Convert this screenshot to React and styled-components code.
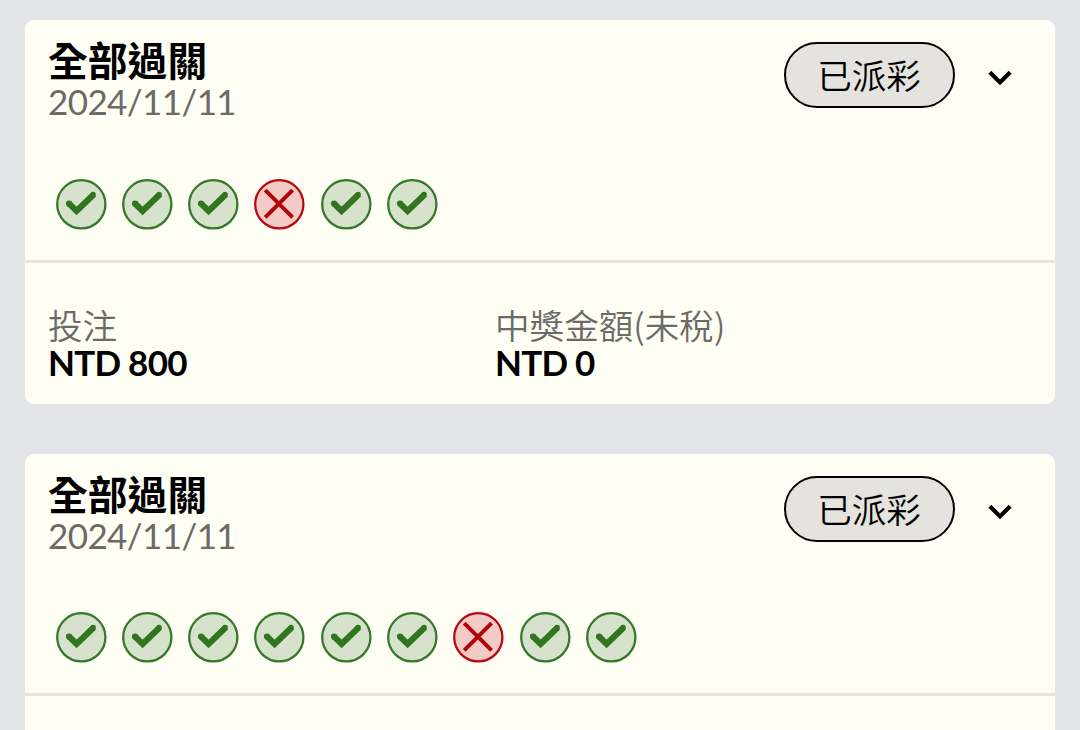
import React from "react";
import styled, { createGlobalStyle } from "styled-components";

const GlobalStyle = createGlobalStyle`
  * {
    box-sizing: border-box;
  }

  body {
    margin: 0;
    background-color: #e4e5e8;
    font-family: "Lato", "Noto Sans CJK TC", sans-serif;
  }

  p, h2, ul, dl, dt, dd {
    margin: 0;
    padding: 0;
  }
`;

const TicketList = styled.main`
  display: flex;
  flex-direction: column;
  gap: 50px;
  height: 730px;
  padding: 20px 25px 0;
  overflow: hidden;
`;

const TicketCard = styled.article`
  height: 384px;
  flex-shrink: 0;
  border-radius: 9px;
  background-color: #fffef5;
`;

const TicketTop = styled.section`
  height: ${(props) => props.$height}px;
  border-bottom: 3px solid #e7e3de;
`;

const TicketHeader = styled.header`
  display: flex;
  justify-content: space-between;
  height: ${(props) => props.$height}px;
  padding: 22px 43.5px 0 23px;
`;

const TicketTitle = styled.h2`
  margin-top: -1px;
  font-size: 39.8px;
  font-weight: 700;
  line-height: 40px;
  color: #000;
`;

const TicketDate = styled.p`
  font-size: 35px;
  letter-spacing: -0.6px;
  line-height: 40px;
  color: #6b6a66;
`;

const HeaderActions = styled.div`
  display: flex;
  align-items: flex-start;
`;

const StatusPill = styled.span`
  display: flex;
  justify-content: center;
  width: 171px;
  height: 66px;
  border: 2.5px solid #000;
  border-radius: 33px;
  background-color: #e5e3de;
  font-family: "Noto Sans CJK TC DemiLight", "Noto Sans CJK TC", sans-serif;
  font-size: 34.5px;
  font-weight: 350;
  line-height: 61px;
  color: #000;
`;

const ExpandButton = styled.button`
  display: flex;
  margin: 28px 0 0 33px;
  padding: 0;
  border: 0;
  background: none;
  cursor: pointer;
`;

const ResultList = styled.ul`
  display: flex;
  gap: 15.3px;
  padding-left: 30.5px;
  list-style: none;

  > li {
    width: 51px;
    height: 51px;
  }

  svg {
    display: block;
  }
`;

const AmountList = styled.dl`
  display: grid;
  grid-template-columns: 447px 1fr;
  padding: 41px 23px 0;
`;

const AmountLabel = styled.dt`
  font-family: "Noto Sans CJK TC DemiLight", "Noto Sans CJK TC", sans-serif;
  font-size: 34.6px;
  font-weight: 350;
  line-height: 40px;
  color: #6b6a66;
`;

const AmountValue = styled.dd`
  font-size: 35px;
  font-weight: 700;
  letter-spacing: -0.75px;
  line-height: 36px;
  color: #000;
`;

const tickets = [
  {
    id: 1,
    headerHeight: 159,
    topHeight: 243,
    results: [true, true, true, false, true, true],
    amounts: [
      { label: "投注", value: 800 },
      { label: "中獎金額(未稅)", value: 0 },
    ],
  },
  {
    id: 2,
    headerHeight: 158,
    topHeight: 242,
    results: [true, true, true, true, true, true, false, true, true],
    amounts: [],
  },
];

const ChevronIcon = () => (
  <svg width="24" height="16" viewBox="0 0 24 16" fill="none">
    <path d="M1.8 2.2 12 12.4 22.2 2.2" stroke="#000" strokeWidth="4.2" />
  </svg>
);

const WonIcon = () => (
  <svg width="51" height="51" viewBox="0 0 51 51" fill="none">
    <circle cx="25.3" cy="25.3" r="24.1" fill="#d7e2cc" stroke="#35782a" strokeWidth="2.3" />
    <circle cx="13" cy="24.5" r="3.1" fill="#32751f" />
    <path d="M13 24.5 20.6 32 37.9 15.2" stroke="#32751f" strokeWidth="6.2" />
    <circle cx="37.2" cy="15.4" r="2.6" fill="#32751f" />
  </svg>
);

const LostIcon = () => (
  <svg width="51" height="51" viewBox="0 0 51 51" fill="none">
    <circle cx="25.3" cy="25.3" r="24.1" fill="#f3cbc6" stroke="#b80810" strokeWidth="2.3" />
    <path d="M11.2 11.2 38.6 38.4M38.6 11.2 11.2 38.4" stroke="#b4040b" strokeWidth="4" />
  </svg>
);

const Ticket = ({ ticket }) => {
  const resultItems = ticket.results.map((won, index) => {
    return <li key={index}>{won ? <WonIcon /> : <LostIcon />}</li>;
  });

  return (
    <TicketCard>
      <TicketTop $height={ticket.topHeight}>
        <TicketHeader $height={ticket.headerHeight}>
          <div>
            <TicketTitle>全部過關</TicketTitle>
            <TicketDate>2024/11/11</TicketDate>
          </div>
          <HeaderActions>
            <StatusPill>已派彩</StatusPill>
            <ExpandButton aria-expanded="false">
              <ChevronIcon />
            </ExpandButton>
          </HeaderActions>
        </TicketHeader>
        <ResultList>{resultItems}</ResultList>
      </TicketTop>
      <AmountList>
        {ticket.amounts.map((amount) => (
          <div key={amount.label}>
            <AmountLabel>{amount.label}</AmountLabel>
            <AmountValue>NTD {amount.value}</AmountValue>
          </div>
        ))}
      </AmountList>
    </TicketCard>
  );
};

const App = () => {
  return (
    <>
      <GlobalStyle />
      <TicketList>
        {tickets.map((ticket) => (
          <Ticket key={ticket.id} ticket={ticket} />
        ))}
      </TicketList>
    </>
  );
};

export default App;
